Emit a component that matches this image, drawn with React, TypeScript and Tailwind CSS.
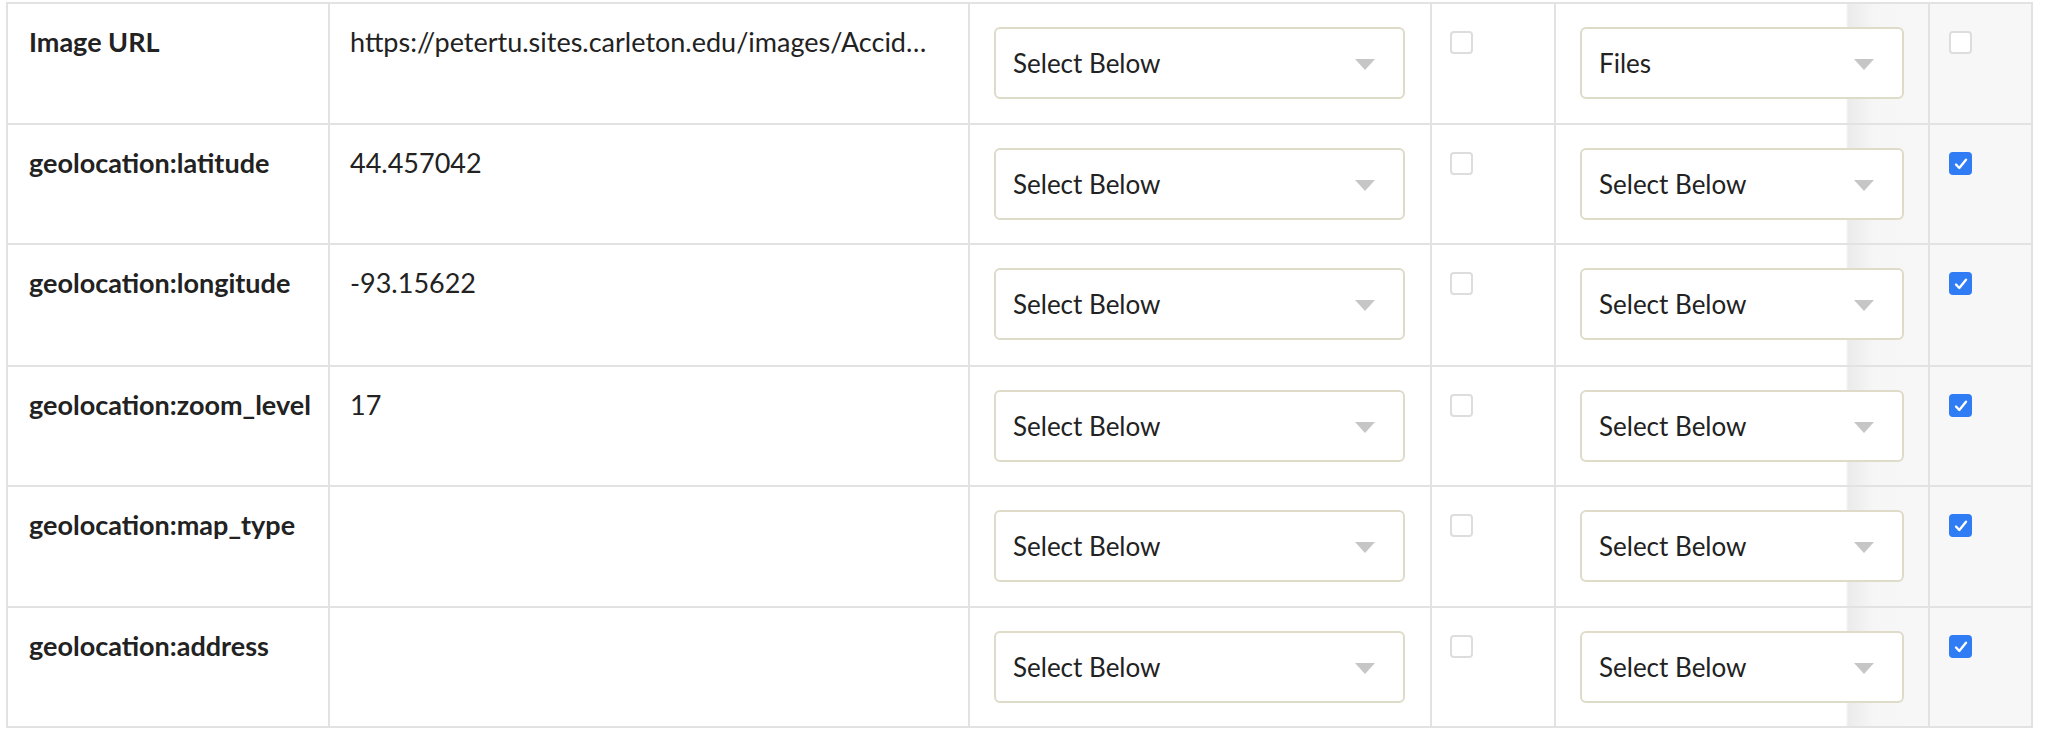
import React from "react";

type Row = {
  label: string;
  value: string;
  sel2: string;
  checked: boolean;
  h: string;
};

const rows: Row[] = [
  { label: "Image URL", value: "https://petertu.sites.carleton.edu/images/Accid…", sel2: "Files", checked: false, h: "h-[121px]" },
  { label: "geolocation:latitude", value: "44.457042", sel2: "Select Below", checked: true, h: "h-[120px]" },
  { label: "geolocation:longitude", value: "-93.15622", sel2: "Select Below", checked: true, h: "h-[122px]" },
  { label: "geolocation:zoom_level", value: "17", sel2: "Select Below", checked: true, h: "h-[120px]" },
  { label: "geolocation:map_type", value: "", sel2: "Select Below", checked: true, h: "h-[121px]" },
  { label: "geolocation:address", value: "", sel2: "Select Below", checked: true, h: "h-[120px]" },
];

function Select({ text, w }: { text: string; w: string }) {
  return (
    <div
      className={`${w} h-[72px] mt-[23px] rounded-[6px] border-2 border-[#dedbc9] bg-white flex items-center justify-between pl-[17px] pr-[28px]`}
    >
      <span className="text-[26px] text-[#222222] leading-none">{text}</span>
      <svg width="20" height="11" viewBox="0 0 20 11" className="mt-[2px]">
        <polygon points="0,0 20,0 10,11" fill="#c6c6c6" />
      </svg>
    </div>
  );
}

function Box({ checked }: { checked: boolean }) {
  if (checked) {
    return (
      <div className="w-[23px] h-[23px] mt-[27px] rounded-[4px] bg-[#2f7cf5] flex items-center justify-center">
        <svg width="14" height="12" viewBox="0 0 14 12">
          <path d="M2 6.5 L5.3 10 L12 1.8" fill="none" stroke="#fff" strokeWidth="2.4" strokeLinecap="round" strokeLinejoin="round" />
        </svg>
      </div>
    );
  }
  return <div className="w-[23px] h-[23px] mt-[27px] rounded-[4px] border-2 border-[#dddddd] bg-white" />;
}

export default function App() {
  return (
    <div className="w-[2048px] h-[731px] bg-white overflow-hidden font-['Lato','Open_Sans',sans-serif] text-[#222222]">
      <div className="ml-[6px] mt-[2px] w-[2027px] border-l-2 border-t-2 border-[#e2e2e2]">
        {rows.map((r, i) => (
          <div key={i} className={`grid grid-cols-[322px_640px_462px_124px_374px_103px] ${r.h}`}>
            <div className="border-r-2 border-b-2 border-[#e2e2e2] pl-[21px] pt-[22px]">
              <span className="text-[27px] font-bold leading-[32px] whitespace-nowrap">{r.label}</span>
            </div>
            <div className="border-r-2 border-b-2 border-[#e2e2e2] pl-[20px] pt-[22px]">
              <span className="text-[27px] leading-[32px] whitespace-nowrap">{r.value}</span>
            </div>
            <div className="border-r-2 border-b-2 border-[#e2e2e2] pl-[24px]">
              <Select text="Select Below" w="w-[411px]" />
            </div>
            <div className="border-r-2 border-b-2 border-[#e2e2e2] pl-[18px]">
              <Box checked={false} />
            </div>
            <div className="border-r-2 border-b-2 border-[#e2e2e2] pl-[24px] bg-[linear-gradient(to_right,#ffffff_0px,#ffffff_290px,#ebebeb_292px,#f6f6f6_318px,#f7f7f7_100%)]">
              <Select text={r.sel2} w="w-[324px]" />
            </div>
            <div className="border-r-2 border-b-2 border-[#e2e2e2] pl-[19px] bg-[#f7f7f7]">
              <Box checked={r.checked} />
            </div>
          </div>
        ))}
      </div>
    </div>
  );
}
